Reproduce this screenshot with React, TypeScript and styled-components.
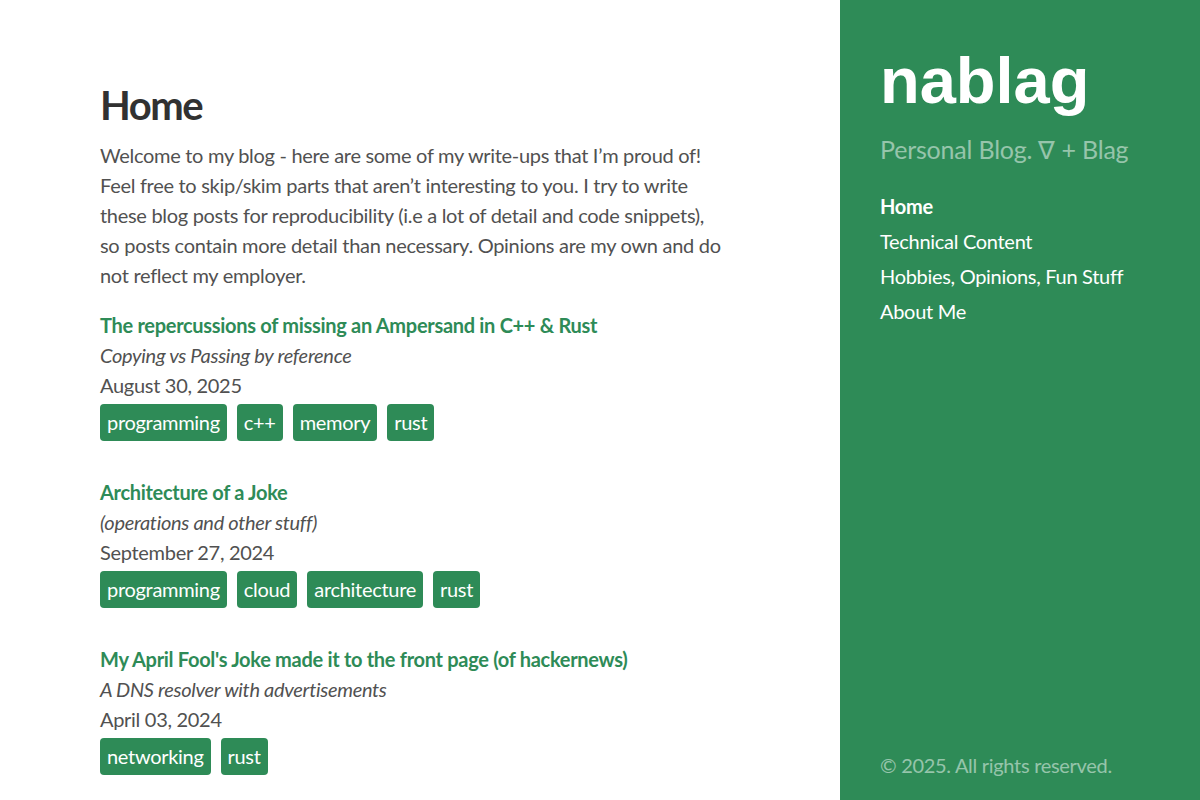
import styled, { createGlobalStyle } from 'styled-components';

const GREEN = '#2e8b57';

const GlobalStyle = createGlobalStyle`
  * { box-sizing: border-box; }
  html, body, #root { margin: 0; padding: 0; height: 100%; }
  body {
    font-family: Lato, 'Noto Sans', sans-serif;
    font-size: 20px;
    line-height: 1.5;
    letter-spacing: -0.3px;
    color: #515151;
    background-color: #fff;
  }
`;

const PageStyles = styled.div`
  display: flex;
  flex-direction: row;
  width: 1200px;
  height: 800px;
  overflow: hidden;
`;

const ContentStyles = styled.main`
  flex: 1;
  padding: 80px 0 0 100px;
`;

const ContentInnerStyles = styled.div`
  max-width: 622px;
`;

const PageTitleStyles = styled.h1`
  margin: 0 0 10px;
  font-size: 40px;
  line-height: 1.25;
  font-weight: 700;
  letter-spacing: -1.5px;
  color: #313131;
`;

const IntroStyles = styled.p`
  margin: 0 0 20px;
`;

const PostStyles = styled.article`
  margin-bottom: 36px;
`;

const PostTitleStyles = styled.a`
  display: block;
  color: ${GREEN};
  font-weight: 700;
  text-decoration: none;
`;

const PostSubtitleStyles = styled.div`
  font-style: italic;
`;

const PostDateStyles = styled.div``;

const TagListStyles = styled.div`
  display: flex;
  flex-wrap: wrap;
  gap: 10px;
  margin-top: 4px;
`;

const TagStyles = styled.span`
  display: inline-block;
  background-color: ${GREEN};
  color: #fff;
  border-radius: 4px;
  padding: 3px 7px 4px;
  line-height: 30px;
`;

const SidebarStyles = styled.aside`
  width: 360px;
  height: 800px;
  background-color: ${GREEN};
  color: rgba(255, 255, 255, 0.5);
  padding: 40px 40px 20px;
  display: flex;
  flex-direction: column;
`;

const BrandStyles = styled.h1`
  margin: 0 0 10px;
  font-family: 'Liberation Sans', Arial, sans-serif;
  font-size: 65px;
  line-height: 1.25;
  font-weight: 700;
  letter-spacing: 0;
  color: #fff;
`;

const LeadStyles = styled.p`
  margin: 0 0 20px;
  font-size: 25px;
  line-height: 1.5;
  font-weight: 400;
  letter-spacing: -0.2px;
`;

const NavStyles = styled.nav`
  display: flex;
  flex-direction: column;
`;

const NavItemStyles = styled.a<{ $active?: boolean }>`
  display: block;
  line-height: 35px;
  color: #fff;
  text-decoration: none;
  font-weight: ${({ $active }) => ($active ? 700 : 400)};
`;

const FooterStyles = styled.p`
  margin: auto 0 0;
  line-height: 30px;
`;

const posts = [
  {
    title: 'The repercussions of missing an Ampersand in C++ & Rust',
    subtitle: 'Copying vs Passing by reference',
    date: 'August 30, 2025',
    tags: ['programming', 'c++', 'memory', 'rust'],
  },
  {
    title: 'Architecture of a Joke',
    subtitle: '(operations and other stuff)',
    date: 'September 27, 2024',
    tags: ['programming', 'cloud', 'architecture', 'rust'],
  },
  {
    title: "My April Fool's Joke made it to the front page (of hackernews)",
    subtitle: 'A DNS resolver with advertisements',
    date: 'April 03, 2024',
    tags: ['networking', 'rust'],
  },
];

const navItems = ['Home', 'Technical Content', 'Hobbies, Opinions, Fun Stuff', 'About Me'];

export default function App() {
  return (
    <>
      <GlobalStyle />
      <PageStyles>
        <ContentStyles>
          <ContentInnerStyles>
            <PageTitleStyles>Home</PageTitleStyles>
            <IntroStyles>
              Welcome to my blog - here are some of my write-ups that I’m proud of! Feel free to
              skip/skim parts that aren’t interesting to you. I try to write these blog posts for
              reproducibility (i.e a lot of detail and code snippets), so posts contain more detail
              than necessary. Opinions are my own and do not reflect my employer.
            </IntroStyles>
            {posts.map((post) => (
              <PostStyles key={post.title}>
                <PostTitleStyles href="#">{post.title}</PostTitleStyles>
                <PostSubtitleStyles>{post.subtitle}</PostSubtitleStyles>
                <PostDateStyles>{post.date}</PostDateStyles>
                <TagListStyles>
                  {post.tags.map((tag) => (
                    <TagStyles key={tag}>{tag}</TagStyles>
                  ))}
                </TagListStyles>
              </PostStyles>
            ))}
          </ContentInnerStyles>
        </ContentStyles>
        <SidebarStyles>
          <BrandStyles>nablag</BrandStyles>
          <LeadStyles>Personal Blog. ∇ + Blag</LeadStyles>
          <NavStyles>
            {navItems.map((item, i) => (
              <NavItemStyles key={item} href="#" $active={i === 0}>
                {item}
              </NavItemStyles>
            ))}
          </NavStyles>
          <FooterStyles>© 2025. All rights reserved.</FooterStyles>
        </SidebarStyles>
      </PageStyles>
    </>
  );
}
